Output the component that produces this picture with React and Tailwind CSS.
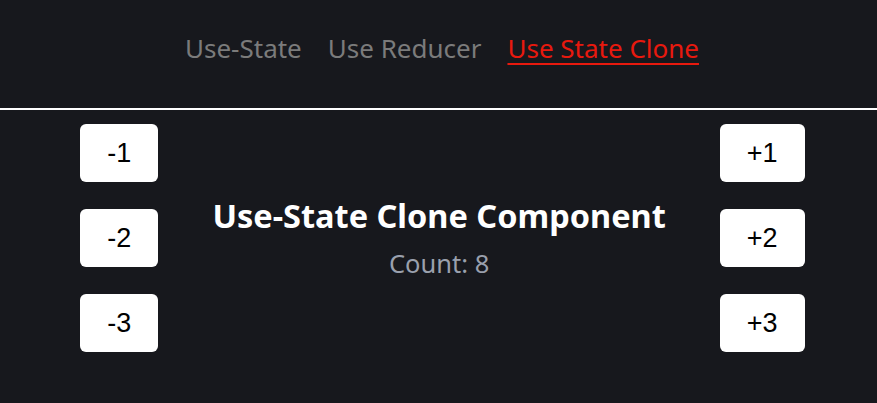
import React, { useState } from 'react';

const links = ['Use-State', 'Use Reducer', 'Use State Clone'];

function CountButton({ label, onClick }) {
  return (
    <button
      onClick={onClick}
      className="bg-white text-black rounded-md px-[27px] py-[14px] text-[27px] leading-[30px] font-['Liberation_Sans',Arial,sans-serif]"
    >
      {label}
    </button>
  );
}

export default function App() {
  const [count, setCount] = useState(8);
  const active = 'Use State Clone';

  return (
    <div className="min-h-screen bg-[#17181d] font-['Noto_Sans',sans-serif]">
      <header className="h-[110px] border-b-2 border-white flex justify-center pt-[28px] pl-[7px]">
        <nav className="flex gap-[26px] text-[26px] leading-[40px]">
          {links.map(link => (
            <a
              key={link}
              href="#"
              className={link === active ? 'text-[#e8190e] underline underline-offset-[5px]' : 'text-[#7b7b7b]'}
            >
              {link}
            </a>
          ))}
        </nav>
      </header>

      <main className="flex justify-center items-center gap-[54px] pt-[14px] pl-[8px]">
        <div className="flex flex-col gap-[27px]">
          {[1, 2, 3].map(n => (
            <CountButton key={n} label={`-${n}`} onClick={() => setCount(c => c - n)} />
          ))}
        </div>

        <div className="flex flex-col items-center -mt-[2px]">
          <h2 className="text-white font-bold text-[32.5px] leading-[44px]">Use-State Clone Component</h2>
          <p className="text-[#9aa0ad] text-[25.5px] leading-[36px] mt-[7px]">Count: {count}</p>
        </div>

        <div className="flex flex-col gap-[27px]">
          {[1, 2, 3].map(n => (
            <CountButton key={n} label={`+${n}`} onClick={() => setCount(c => c + n)} />
          ))}
        </div>
      </main>
    </div>
  );
}
